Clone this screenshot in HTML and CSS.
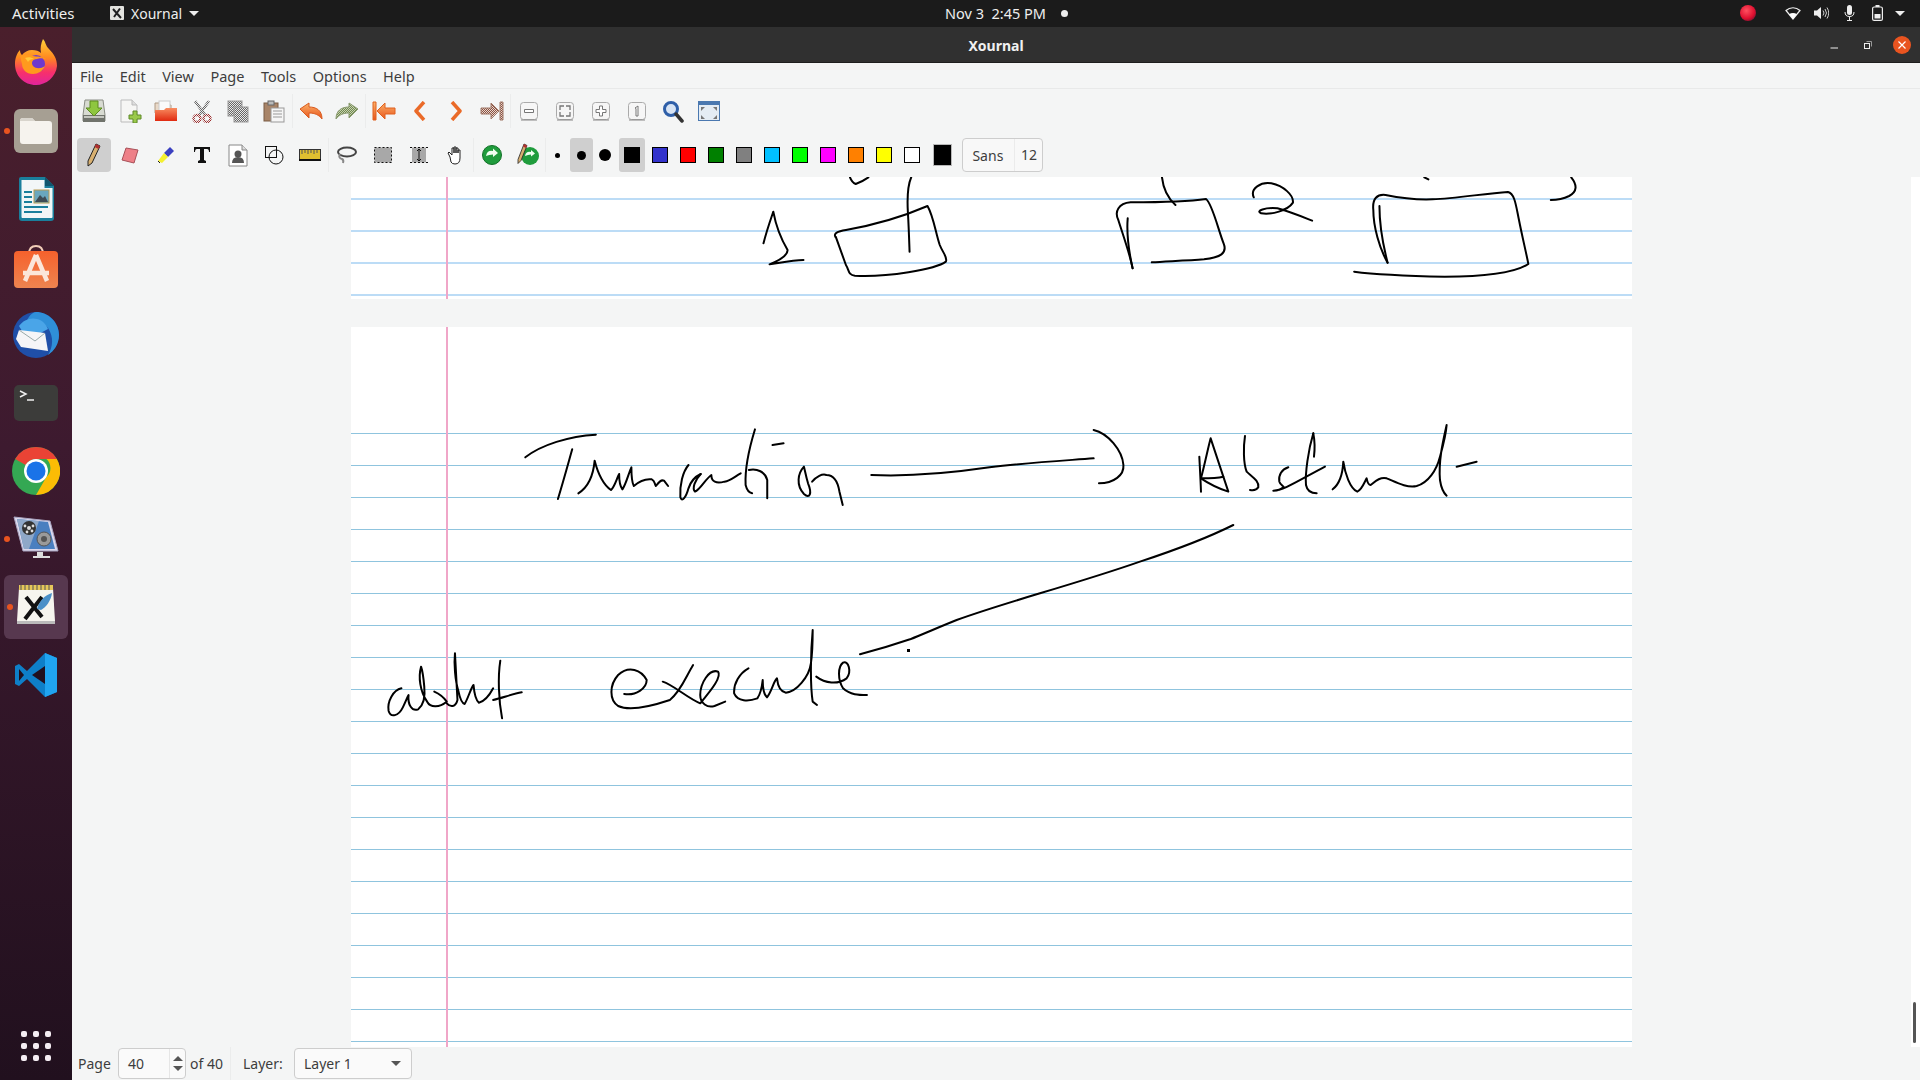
FILE: index.html
```html
<!DOCTYPE html>
<html>
<head>
  <meta charset="utf-8">
  <title>Xournal</title>
  <link rel="stylesheet" href="styles.css">
</head>
<body>
  <svg class="defs" width="0" height="0">
    <defs>
      <pattern id="dith-grey" width="2" height="2" patternUnits="userSpaceOnUse"><rect width="2" height="2" fill="#e8e8e8"/><rect width="1" height="1" fill="#666"/><rect x="1" y="1" width="1" height="1" fill="#666"/></pattern>
      <pattern id="dith-red" width="2" height="2" patternUnits="userSpaceOnUse"><rect width="2" height="2" fill="#eee"/><rect width="1" height="1" fill="#a03030"/><rect x="1" y="1" width="1" height="1" fill="#a03030"/></pattern>
      <pattern id="dith-green" width="2" height="2" patternUnits="userSpaceOnUse"><rect width="2" height="2" fill="#c8d0b0"/><rect width="1" height="1" fill="#6f8a50"/><rect x="1" y="1" width="1" height="1" fill="#6f8a50"/></pattern>
      <pattern id="dith-brown" width="2" height="2" patternUnits="userSpaceOnUse"><rect width="2" height="2" fill="#e8d8d0"/><rect width="1" height="1" fill="#8a5040"/><rect x="1" y="1" width="1" height="1" fill="#8a5040"/></pattern>
      <linearGradient id="fox" x1="0" y1="0" x2="0" y2="1"><stop offset="0" stop-color="#ffd23a"/><stop offset=".4" stop-color="#ff8a1f"/><stop offset=".72" stop-color="#f8306a"/><stop offset="1" stop-color="#e0249c"/></linearGradient>
      <linearGradient id="bag" x1="0" y1="0" x2="0" y2="1"><stop offset="0" stop-color="#f6612c"/><stop offset="1" stop-color="#ee8450"/></linearGradient>
      <linearGradient id="arrow-o" x1="0" y1="0" x2="0" y2="1"><stop offset="0" stop-color="#fbb26a"/><stop offset="1" stop-color="#e8531a"/></linearGradient>
      <linearGradient id="folder-o" x1="0" y1="0" x2="0" y2="1"><stop offset="0" stop-color="#f88c60"/><stop offset="1" stop-color="#e02a10"/></linearGradient>
      <radialGradient id="ball" cx=".4" cy=".35" r=".7"><stop offset="0" stop-color="#ff5060"/><stop offset=".7" stop-color="#e01030"/><stop offset="1" stop-color="#8a1030"/></radialGradient>
    </defs>
  </svg>

  <header class="topbar">
    <div class="topbar-left">
      <span class="activities">Activities</span>
      <span class="appmenu">
        <svg width="14" height="14" viewBox="0 0 14 14"><rect width="14" height="14" rx="1" fill="#e4e4e0"/><path d="M3 3l8 9M10 2.500L4 11" stroke="#222" stroke-width="2"/></svg>
        <span>Xournal</span>
        <i class="caret"></i>
      </span>
    </div>
    <div class="clock">Nov 3&nbsp; 2:45 PM <i class="clock-dot"></i></div>
    <div class="tray">
      <svg class="rec" width="16" height="16" viewBox="0 0 16 16"><circle cx="8" cy="8" r="8" fill="url(#ball)"/></svg>
      <span class="tray-item"><svg width="16" height="14" viewBox="0 0 16 14"><path d="M8 13L1 4.500C5 .8 11 .8 15 4.500z" fill="none" stroke="#eee" stroke-width="1.200"/><path d="M8 13L4 8.200C6.500 6.600 9.500 6.600 12 8.200z" fill="#fff"/></svg></span>
      <span class="tray-item"><svg width="15" height="14" viewBox="0 0 15 14"><path d="M0 4.500h3L7 1v12L3 9.500H0z" fill="#eee"/><path d="M9 4.500q2 2.500 0 5M11 3q3 4 0 8M13 1.500q3.500 5.500 0 11" fill="none" stroke="#ccc"/></svg></span>
      <span class="tray-item"><svg width="11" height="16" viewBox="0 0 11 16"><rect x="3" y="0" width="5" height="10" rx="2.500" fill="#eee"/><path d="M1 7q0 4.500 4.500 4.500T10 7M5.500 11.500V15M3 15.500h5" fill="none" stroke="#eee"/></svg></span>
      <span class="tray-item"><svg width="11" height="16" viewBox="0 0 11 16"><rect x=".6" y="2" width="9.800" height="13.400" rx="1.500" fill="none" stroke="#eee" stroke-width="1.200"/><rect x="3.500" y="0" width="4" height="2" fill="#eee"/><rect x="2.500" y="9" width="6" height="4.500" fill="#eee"/></svg></span>
      <i class="caret tray-caret"></i>
    </div>
  </header>

  <div class="desktop">
    <nav class="dock">
      <div class="dock-item">
        <svg class="lift" width="46" height="48" viewBox="0 0 46 48"><path d="M2 26C2 20 4 15 7 12c0 3 1 4 2 5 2-3 6-5 10-5 4 0 7 1 9 3C27 10 28 5 30 1c3 3 2 6 6 10 5 5 8 10 8 17-1 11-11 19-21 19C11 47 2 38 2 26z" fill="url(#fox)"/><circle cx="23" cy="26" r="9" fill="#7038cc"/><path d="M7 18c4-2 9-2 13 0 4 1 9 0 13 3-3-1-7-1-9 0-5 0-6 4-4 7 3 3 8 3 12 0-2 5-7 8-12 8-7 0-11-5-11-10-1-3-1-6-2-8z" fill="#ff9a1e"/><path d="M12 20c3-1 6-1 9 1-3 0-5 1-6 3-1-2-2-3-3-4z" fill="#ffc83a"/></svg>
      </div>
      <div class="dock-item">
        <i class="running"></i>
        <svg width="44" height="44" viewBox="0 0 44 44"><rect width="44" height="44" rx="6" fill="#a69f93"/><path d="M6 12q0-3 3-3h9l3 3h14q3 0 3 3v17q0 3-3 3H9q-3 0-3-3z" fill="#f6f3ee"/><path d="M6 12q0-3 3-3h9l3 3z" fill="#d8d4cc"/></svg>
      </div>
      <div class="dock-item">
        <svg width="38" height="46" viewBox="0 0 38 46"><path d="M2 3q0-2 2-2h24l9 9v32q0 3-3 3H5q-3 0-3-3z" fill="#1a7f9c"/><path d="M4.500 4h23v8h8v29q0 1-1 1H5.500q-1 0-1-1z" fill="#f2f6f7"/><path d="M28 1l9 9h-9z" fill="#10546c"/><path d="M7 15h8v2H7zM7 20h8v2H7zM7 25h8v2H7zM7 30h24v2H7zM7 35h18v2H7z" fill="#1a7f9c"/><rect x="17" y="14" width="15" height="13" fill="#6aa7bd" stroke="#b89a50"/><path d="M18 26l5-7 3 3 2-2 3 6z" fill="#404c54"/></svg>
      </div>
      <div class="dock-item">
        <svg class="lift" width="44" height="44" viewBox="0 0 44 44"><path d="M15 10q0-8 7-8t7 8" fill="none" stroke="#f2cdb8" stroke-width="2"/><rect y="7" width="44" height="37" rx="4" fill="url(#bag)"/><path d="M22 11L11 37M22 11l11 26M9 29h26" fill="none" stroke="#fbe6da" stroke-width="4.500"/></svg>
      </div>
      <div class="dock-item">
        <svg width="48" height="48" viewBox="0 0 48 48"><circle cx="24" cy="24" r="23" fill="#1f4fa8"/><path d="M24 1c12 0 23 10 23 23 0 9-5 16-11 20 5-8 6-18 0-27-5-6-14-8-22-5 2-6 6-11 10-11z" fill="#2f8fd8"/><path d="M7 15c4-6 12-9 18-7 5 1 9 5 11 10L21 26 10 20z" fill="#4aa5e8"/><path d="M7 19l26 3 3 18-27-4-5-8z" fill="#f5f5f7"/><path d="M7 19l16 11 10-8" fill="none" stroke="#9aa" stroke-width="1"/></svg>
      </div>
      <div class="dock-item">
        <svg width="44" height="36" viewBox="0 0 44 36"><rect width="44" height="36" rx="5" fill="#3c3c3a"/><path d="M6 6l6 3-6 3M13 15h7" fill="none" stroke="#eee" stroke-width="1.500"/></svg>
      </div>
      <div class="dock-item">
        <svg width="48" height="48" viewBox="0 0 48 48"><circle cx="24" cy="24" r="24" fill="#34a853"/><path d="M24 0a24 24 0 0 1 20.800 12H24a12 12 0 0 0-10.400 6L3.200 12A24 24 0 0 1 24 0z" fill="#ea4335"/><path d="M44.800 12A24 24 0 0 1 24 48l10.400-18a12 12 0 0 0 0-18z" fill="#fbbc05"/><circle cx="24" cy="24" r="12" fill="#fff"/><circle cx="24" cy="24" r="9.500" fill="#1a73e8"/></svg>
      </div>
      <div class="dock-item">
        <i class="running"></i>
        <svg width="46" height="46" viewBox="0 0 46 46"><path d="M1 1l36 4 8 30-35 0z" fill="#dcd8ec" stroke="#a8a4c0"/><path d="M4 3l31 3 7 27-31 0z" fill="#4a7fc0"/><path d="M4 3l22 2-10 28h-5z" fill="#8fa8c8"/><circle cx="16" cy="12" r="7" fill="#333"/><circle cx="16" cy="12" r="2" fill="#ddd"/><circle cx="12" cy="10" r="1.400" fill="#ddd"/><circle cx="20" cy="10" r="1.400" fill="#ddd"/><circle cx="14" cy="16" r="1.400" fill="#ddd"/><circle cx="19" cy="15" r="1.400" fill="#ddd"/><circle cx="31" cy="23" r="7" fill="#9a9a9a" stroke="#555"/><circle cx="31" cy="23" r="3" fill="#555"/><path d="M24 36h6v4h7v2H20v-2h4z" fill="#ddd"/></svg>
      </div>
      <div class="dock-slot">
        <div class="dock-item dock-current">
          <i class="running"></i>
          <svg width="40" height="44" viewBox="0 0 40 44"><path d="M3 3h34l2 33H1z" fill="#f6f5ee"/><rect x="3" y="0" width="34" height="5" fill="#e6c85a"/><path d="M5 0v5M9 0v5M13 0v5M17 0v5M21 0v5M25 0v5M29 0v5M33 0v5" stroke="#555" stroke-width="1"/><path d="M1 36h38v3H1z" fill="#bbb"/><path d="M10 12l16 20M26 12L9 34" stroke="#111" stroke-width="4"/><path d="M36 8c-7 2-13 8-15 16l4 1c5-3 10-9 11-17z" fill="#4a90c8"/></svg>
        </div>
      </div>
      <div class="dock-item">
        <svg width="44" height="44" viewBox="0 0 44 44"><path d="M31 0L13 18 5 11 1 13v18l4 2 8-7 18 18 12-5V5z" fill="#0e7fc8"/><path d="M31 0l12 5v34l-12 5z" fill="#20a4f0"/><path d="M31 13L18 22l13 9z" fill="#21101e"/><path d="M5 16l5 6-5 6z" fill="#21101e"/></svg>
      </div>
      <div class="app-grid">
        <i></i><i></i><i></i><i></i><i></i><i></i><i></i><i></i><i></i>
      </div>
    </nav>

    <main class="window">
      <div class="titlebar">
        <span></span>
        <span class="title">Xournal</span>
        <div class="win-controls">
          <span class="win-btn"><svg width="10" height="10" viewBox="0 0 10 10"><path d="M1.500 8h7.500" stroke="#eee" stroke-width="1"/></svg></span>
          <span class="win-btn"><svg width="10" height="10" viewBox="0 0 10 10"><rect x="1.500" y="3.500" width="5" height="5" fill="none" stroke="#eee"/><path d="M3.500 1.500h5v5" fill="none" stroke="#999"/></svg></span>
          <span class="win-btn"><span class="win-close"><svg width="10" height="10" viewBox="0 0 10 10"><path d="M1.500 1.500l7 7M8.500 1.500l-7 7" stroke="#fff" stroke-width="1.200"/></svg></span></span>
        </div>
      </div>

      <div class="menubar">
        <span>File</span><span>Edit</span><span>View</span><span>Page</span><span>Tools</span><span>Options</span><span>Help</span>
      </div>

      <div class="toolbar">
        <span class="tool"><svg width="24" height="24" viewBox="0 0 24 24"><path d="M3 1h18l2 15v6H1v-6z" fill="#d8dbd2" stroke="#8a8d84"/><rect x="1" y="16" width="22" height="7" fill="#70736c"/><rect x="2" y="17" width="20" height="2" fill="#c4c6bf"/><path d="M8 2h8v7h4l-8 8-8-8h4z" fill="#8ec63f" stroke="#5c8a20"/></svg></span>
        <span class="tool"><svg width="24" height="24" viewBox="0 0 24 24"><path d="M3 1h11l5 5v17H3z" fill="#f6f6f4" stroke="#bbb"/><path d="M14 1v5h5" fill="#ddd" stroke="#bbb"/><path d="M15 12h4v4h4v4h-4v4h-4v-4h-4v-4h4z" fill="#9ac94a" stroke="#5f8a28"/></svg></span>
        <span class="tool"><svg width="24" height="22" viewBox="0 0 24 22"><path d="M1 3h8l2 2h6v8H1z" fill="#e9d9c8" stroke="#b09a84"/><rect x="5" y="1" width="11" height="12" fill="#fafafa" stroke="#ccc"/><path d="M1 10h9l2-2h11v13H1z" fill="url(#folder-o)"/></svg></span>
        <span class="tool"><svg width="20" height="23" viewBox="0 0 20 23"><path d="M3 1l10 14M17 1L7 15" stroke="url(#dith-grey)" stroke-width="3"/><circle cx="5" cy="18.500" r="3.500" fill="none" stroke="url(#dith-red)" stroke-width="2.500"/><circle cx="15" cy="18.500" r="3.500" fill="none" stroke="url(#dith-red)" stroke-width="2.500"/></svg></span>
        <span class="tool"><svg width="22" height="23" viewBox="0 0 22 23"><rect x="1" y="1" width="14" height="15" fill="url(#dith-grey)" stroke="#999"/><rect x="7" y="7" width="14" height="15" fill="url(#dith-grey)" stroke="#999"/></svg></span>
        <span class="tool"><svg width="22" height="23" viewBox="0 0 22 23"><rect x="1" y="3" width="14" height="18" fill="#a88468" stroke="#7a5c44"/><rect x="5" y="1" width="6" height="4" fill="#bbb" stroke="#666"/><rect x="8" y="8" width="13" height="14" fill="#f6f6f6" stroke="#999"/><path d="M10 11h9M10 14h9M10 17h9" stroke="#999"/></svg></span>
        <i class="sep"></i>
        <span class="tool"><svg width="24" height="18" viewBox="0 0 24 18"><path d="M1 7L10 1v4c7 0 13 3 13 12-3-4-7-6-13-6v5z" fill="url(#arrow-o)" stroke="#d95a1e" stroke-linejoin="round"/></svg></span>
        <span class="tool"><svg width="24" height="18" viewBox="0 0 24 18"><path d="M23 7L14 1v4C7 5 1 8 1 17c3-4 7-6 13-6v5z" fill="url(#dith-green)" stroke="#8a9a70" stroke-linejoin="round"/></svg></span>
        <i class="sep"></i>
        <span class="tool"><svg width="24" height="20" viewBox="0 0 24 20"><path d="M1 1h3v18H1zM5 10l8-8v5h10v6H13v5z" fill="url(#arrow-o)" stroke="#e0601e" stroke-linejoin="round"/></svg></span>
        <span class="tool"><svg width="12" height="20" viewBox="0 0 12 20"><path d="M10 1L2 10l8 9" fill="none" stroke="#ea6a28" stroke-width="3.500" stroke-linejoin="round"/></svg></span>
        <span class="tool"><svg width="12" height="20" viewBox="0 0 12 20"><path d="M2 1l8 9-8 9" fill="none" stroke="#ea6a28" stroke-width="3.500" stroke-linejoin="round"/></svg></span>
        <span class="tool"><svg width="24" height="20" viewBox="0 0 24 20"><path d="M23 1h-3v18h3zM19 10l-8-8v5H1v6h10v5z" fill="url(#dith-brown)" stroke="#a07868" stroke-linejoin="round"/></svg></span>
        <i class="sep"></i>
        <span class="tool"><svg width="18" height="19" viewBox="0 0 18 19"><rect x=".5" y=".5" width="17" height="17" rx="3" fill="#f6f6f6" stroke="#aaa"/><path d="M1 18h16" stroke="#888"/><path d="M4.500 7.500h9v3h-9z" fill="#fff" stroke="#777"/></svg></span>
        <span class="tool"><svg width="18" height="19" viewBox="0 0 18 19"><rect x=".5" y=".5" width="17" height="17" rx="3" fill="#f6f6f6" stroke="#aaa"/><path d="M1 18h16" stroke="#888"/><path d="M4 8V4h4M10 4h4v4M14 10v4h-4M8 14H4v-4" fill="none" stroke="#777" stroke-width="1.300"/></svg></span>
        <span class="tool"><svg width="18" height="19" viewBox="0 0 18 19"><rect x=".5" y=".5" width="17" height="17" rx="3" fill="#f6f6f6" stroke="#aaa"/><path d="M1 18h16" stroke="#888"/><path d="M7.500 4h3v3.500H14v3h-3.500V14h-3v-3.500H4v-3h3.500z" fill="#fff" stroke="#777"/></svg></span>
        <span class="tool"><svg width="18" height="19" viewBox="0 0 18 19"><rect x=".5" y=".5" width="17" height="17" rx="3" fill="#f6f6f6" stroke="#aaa"/><path d="M1 18h16" stroke="#888"/><path d="M7 6l3-2v10H8V6.500z" fill="#fff" stroke="#777"/></svg></span>
        <span class="tool"><svg width="22" height="23" viewBox="0 0 22 23"><circle cx="9" cy="9" r="6.500" fill="#d8e4f4" stroke="#2f5fa8" stroke-width="3"/><path d="M14 14l6 7" stroke="#333" stroke-width="3.500" stroke-linecap="round"/></svg></span>
        <span class="tool"><svg width="22" height="20" viewBox="0 0 22 20"><rect x=".5" y=".5" width="21" height="19" fill="#e4ecf4" stroke="#4a78b0"/><rect x="1" y="1" width="20" height="3" fill="#4a78b0"/><path d="M3 6l4 0-4 4zM19 6l-4 0 4 4zM3 18l4 0-4-4zM19 18l-4 0 4-4z" fill="#777"/></svg></span>
      </div>

      <div class="toolbar">
        <span class="tool active"><svg width="14" height="24" viewBox="0 0 14 24"><path d="M9 1l4 2-8 17-4 3 0-5z" fill="#d8b070" stroke="#222"/><path d="M9 1l4 2-1.500 3-4-2z" fill="#b03030"/></svg></span>
        <span class="tool"><svg width="18" height="18" viewBox="0 0 18 18"><path d="M5 2l12 2-4 13-12-3z" fill="#ee8088" stroke="#a85058" stroke-linejoin="round"/></svg></span>
        <span class="tool"><svg width="18" height="18" viewBox="0 0 18 18"><path d="M13 1l4 4-6 6-4-4z" fill="#3a40c0"/><path d="M7 7l4 4-6 6-4-2z" fill="#f4f030"/><path d="M1 15l2 2" stroke="#222"/></svg></span>
        <span class="tool"><svg width="16" height="16" viewBox="0 0 16 16"><path d="M0 0h16v5h-1q0-3-2-3h-3v11l2 1v2H4v-2l2-1V2H3Q1 2 1 5H0z" fill="#111"/></svg></span>
        <span class="tool"><svg width="20" height="23" viewBox="0 0 20 23"><path d="M1 1h13l5 5v16H1z" fill="#fff" stroke="#888"/><path d="M14 1v5h5" fill="#ddd" stroke="#888"/><circle cx="10" cy="10" r="3.500" fill="#555"/><path d="M4 19q0-6 6-6t6 6z" fill="#555"/></svg></span>
        <span class="tool"><svg width="19" height="19" viewBox="0 0 19 19"><rect x=".5" y=".5" width="11" height="11" fill="none" stroke="#111"/><circle cx="11" cy="11" r="7" fill="none" stroke="#111"/></svg></span>
        <span class="tool"><svg width="22" height="12" viewBox="0 0 22 12"><rect x=".5" y=".5" width="21" height="10" fill="#e0c030" stroke="#333"/><path d="M3 1v4M6 1v3M9 1v4M12 1v3M15 1v4M18 1v3" stroke="#555"/><rect y="10" width="22" height="2" fill="#111"/></svg></span>
        <i class="sep"></i>
        <span class="tool"><svg width="20" height="18" viewBox="0 0 20 18"><ellipse cx="10" cy="6" rx="9" ry="4.500" fill="none" stroke="#444" stroke-width="2"/><path d="M3 8q-2 4 2 5 2 1 1 4" fill="none" stroke="#888" stroke-width="2"/></svg></span>
        <span class="tool"><svg width="18" height="16" viewBox="0 0 18 16"><rect x=".5" y=".5" width="17" height="15" fill="#a8a8a8" stroke="#111" stroke-dasharray="2 2"/></svg></span>
        <span class="tool"><svg width="18" height="16" viewBox="0 0 18 16"><rect x="2" y=".5" width="14" height="15" fill="#a8a8a8"/><path d="M0 .5h18M0 15.500h18" stroke="#111" stroke-dasharray="2 2"/><path d="M9 2v12M7 4l2-2 2 2M7 12l2 2 2-2" fill="none" stroke="#111"/></svg></span>
        <span class="tool"><svg width="16" height="20" viewBox="0 0 16 20"><path d="M3 12L1 8l1-1 3 3V3l2 0v5-6h2v6-5h2v5-3h2v8q0 6-5 6-3 0-4-2z" fill="#fff" stroke="#222" stroke-linejoin="round"/></svg></span>
        <i class="sep"></i>
        <span class="tool"><svg width="20" height="20" viewBox="0 0 20 20"><circle cx="10" cy="10" r="9.500" fill="#1f9c3c" stroke="#137028"/><path d="M4 11q1-6 7-5V3.500l5 4.500-5 4V9.500q-4 0-7 1.500z" fill="#f0fff0"/></svg></span>
        <span class="tool"><svg width="24" height="24" viewBox="0 0 24 24"><circle cx="14" cy="13" r="9" fill="#1f9c3c"/><path d="M9 13q1-5 6-4V7l4 3.500-4 3v-2q-3 0-6 1.500z" fill="#f0fff0"/><path d="M8 1l3 1.500-6 15-3 3v-4z" fill="#d8b070" stroke="#222" stroke-width=".8"/><path d="M8 1l3 1.500-1 2.500-3-1.500z" fill="#b03030"/></svg></span>
        <i class="sep sep-thin"></i>
        <span class="thick"><i class="dot dot-s"></i></span>
        <span class="thick active"><i class="dot dot-m"></i></span>
        <span class="thick"><i class="dot dot-l"></i></span>
        <span class="colour active"><i class="swatch c-black"></i></span>
        <span class="colour"><i class="swatch c-blue"></i></span>
        <span class="colour"><i class="swatch c-red"></i></span>
        <span class="colour"><i class="swatch c-green"></i></span>
        <span class="colour"><i class="swatch c-grey"></i></span>
        <span class="colour"><i class="swatch c-cyan"></i></span>
        <span class="colour"><i class="swatch c-lime"></i></span>
        <span class="colour"><i class="swatch c-magenta"></i></span>
        <span class="colour"><i class="swatch c-orange"></i></span>
        <span class="colour"><i class="swatch c-yellow"></i></span>
        <span class="colour"><i class="swatch c-white"></i></span>
        <i class="picker"></i>
        <span class="fontbtn"><span class="font-name">Sans</span><span class="font-size">12</span></span>
      </div>

      <div class="canvas">
        <div class="pages">
          <svg class="page" width="1281" height="122" viewBox="351 177 1281 122">
            <g class="rules-first">
              <rect x="351" y="198" width="1281" height="2"/>
              <rect x="351" y="230" width="1281" height="2"/>
              <rect x="351" y="262" width="1281" height="2"/>
              <rect x="351" y="294" width="1281" height="2"/>
            </g>
            <rect class="margin-line" x="446" y="177" width="2" height="122"/>
            <g class="ink" transform="translate(340 170) scale(.408 .3333)">
              <path d="M1250,22 Q1255,38 1264,42 Q1280,35 1295,22"/>
              <path d="M1400,22 C1390,50 1390,90 1392,130 S1395,210 1396,245"/>
              <path d="M1038,220 C1045,185 1055,150 1062,125 C1068,165 1080,205 1097,240 C1098,258 1075,272 1053,283 C1080,278 1110,270 1136,270"/>
              <path d="M1215,202 C1208,190 1220,184 1240,180 C1300,167 1370,145 1440,108 C1455,140 1460,190 1470,225 C1478,250 1490,262 1485,275 C1460,298 1340,322 1262,317 C1245,315 1248,300 1240,285 L1215,200"/>
            </g>
            <g class="ink" transform="translate(1000 170) scale(.408 .3333)">
              <path d="M397,22 C400,55 412,85 430,105"/>
              <path d="M325,295 C318,250 300,190 290,150 C280,125 290,100 320,97 C380,97 450,97 505,87 C520,100 535,180 548,220 C558,250 540,262 500,268 C460,272 410,274 372,277"/>
              <path d="M313,145 C310,190 315,240 325,295"/>
              <path d="M622,82 C612,55 640,35 665,40 C695,48 720,75 718,98 C705,122 665,135 640,130 C625,122 650,112 680,115 C710,125 740,140 765,152"/>
              <path d="M950,278 C930,235 915,170 915,120 C912,85 925,72 945,75 C985,85 1020,90 1060,88 C1120,85 1190,70 1245,66 C1262,70 1265,110 1272,150 C1280,200 1290,250 1295,282 C1260,310 1180,320 1090,320 C1010,318 930,315 868,305"/>
              <path d="M930,108 C930,170 942,240 950,278"/>
              <path d="M1040,22 L1050,28"/>
              <path d="M1400,22 C1415,45 1415,65 1395,78 C1380,87 1365,90 1350,90"/>
            </g>
          </svg>

          <svg class="page page-second" width="1281" height="720" viewBox="351 327 1281 720">
            <defs>
              <pattern id="rule-lines" x="0" y="433" width="32" height="32" patternUnits="userSpaceOnUse"><rect width="32" height="1" fill="#8fc4de"/></pattern>
            </defs>
            <rect x="351" y="433" width="1281" height="620" fill="url(#rule-lines)"/>
            <rect class="margin-line" x="446" y="327" width="2" height="720"/>
            <g class="ink" transform="translate(500 410) scale(.408 .3333)">
              <path d="M62,142 C100,105 170,78 235,74"/>
              <path d="M177,118 C165,170 155,215 142,267"/>
              <path d="M192,250 C212,235 228,205 232,152 C240,190 255,225 272,240 C282,228 286,205 292,192 C292,210 295,230 300,238 C310,220 315,190 322,172 C322,195 322,215 328,228 C340,215 352,205 372,208 C380,212 378,220 382,228 C390,215 395,208 402,212 L412,228"/>
              <path d="M462,165 C448,185 440,225 442,262 C446,278 456,262 462,235 C468,212 478,200 492,192"/>
              <path d="M492,192 C478,210 470,235 478,245 C490,240 505,205 518,195 C518,215 530,222 550,215 C565,212 575,200 590,190"/>
              <path d="M625,58 C612,110 600,180 602,225 C605,240 610,248 618,250"/>
              <path d="M610,180 C630,175 650,185 655,210 L655,265"/>
              <path d="M668,105 L695,100"/>
              <path d="M745,170 C730,190 725,225 745,252 C760,268 765,250 755,220 C750,200 748,185 745,170"/>
              <path d="M765,215 C775,200 790,190 800,195 C820,195 828,215 832,245 L840,285"/>
              <path d="M910,195 C1000,200 1100,190 1200,172 C1290,158 1380,152 1455,145"/>
              <path d="M1455,60 C1490,70 1525,120 1528,165 C1530,195 1505,220 1468,220"/>
            </g>
            <g class="ink" transform="translate(1100 410) scale(.3333)">
              <path d="M298,140 C300,180 302,215 303,245"/>
              <path d="M303,205 C315,160 325,110 332,85 C345,125 370,200 385,245 C355,235 325,220 303,205"/>
              <path d="M303,205 C330,205 350,205 370,200"/>
              <path d="M435,78 C430,110 430,160 440,185 C455,200 478,212 475,232 C470,240 460,242 450,240"/>
              <path d="M565,172 C545,178 535,195 538,215 C540,225 555,230 550,232 C540,242 530,242 520,242 C550,242 590,215 675,170"/>
              <path d="M640,70 C625,120 615,190 618,225 C622,245 635,250 650,250"/>
              <path d="M640,70 C645,95 645,115 642,140"/>
              <path d="M698,238 C715,225 728,195 730,155 C735,190 750,235 772,245 C785,240 792,220 800,205 C802,215 805,225 812,225 C825,215 840,200 860,205 C885,215 920,235 950,228 C985,218 1010,180 1020,140 C1030,105 1038,75 1040,45 C1030,90 1015,150 1020,210 C1023,230 1030,248 1040,257"/>
              <path d="M1070,170 L1130,155"/>
            </g>
            <g class="ink" transform="translate(370 620) scale(.357 .3333)">
              <path d="M88,205 C65,210 48,245 52,272 C58,295 80,288 92,262 C100,245 105,230 108,225 C105,255 118,275 135,268 C150,255 155,230 152,200 C150,175 148,155 143,140 C135,170 140,215 160,245 C170,265 195,262 215,245 C205,230 195,222 180,215"/>
              <path d="M215,250 C225,262 240,262 245,240 L238,100 C235,130 238,180 248,215 C252,235 258,250 265,252 C275,235 282,205 290,195 C292,220 296,240 305,248 C320,245 335,225 345,205"/>
              <path d="M365,122 C358,170 360,240 370,295"/>
              <path d="M345,240 C375,232 400,222 425,217"/>
              <path d="M712,222 C745,228 775,205 775,180 C760,150 725,135 695,165 C670,195 670,240 695,258 C730,275 790,258 840,240 C870,215 885,170 905,135"/>
              <path d="M820,185 C850,195 890,235 925,250 C960,205 985,170 975,155 C950,145 925,190 925,225 C925,250 945,265 965,258 L995,245"/>
              <path d="M1060,145 C1035,160 1018,190 1020,220 C1030,245 1060,245 1085,235 C1095,220 1098,200 1100,180 C1100,205 1105,225 1112,232 C1125,215 1130,185 1140,175 C1142,195 1150,215 1165,218 C1195,215 1230,170 1235,130 C1240,95 1240,60 1240,30 C1235,90 1232,190 1240,245 L1252,255"/>
              <path d="M1250,170 C1275,190 1310,195 1335,175 C1350,155 1340,120 1325,128 C1310,140 1310,180 1325,205 C1345,225 1370,225 1392,225"/>
            </g>
            <g class="ink" transform="translate(840 510) scale(.3333)">
              <path d="M1180,45 C1100,85 1000,122 900,155 C800,190 700,220 600,250 C500,280 420,305 350,330 C300,350 250,372 210,388 C160,405 110,420 60,433"/>
            </g>
            <rect x="907" y="649" width="3" height="3"/>
          </svg>
        </div>
        <div class="scrollbar"><i class="thumb"></i></div>
      </div>

      <div class="statusbar">
        <span class="status-page">Page</span>
        <span class="spin">
          <span class="spin-value">40</span>
          <span class="spin-arrows"><i class="arrow-up"></i><i class="arrow-down"></i></span>
        </span>
        <span class="status-of">of 40</span>
        <i class="sep status-sep"></i>
        <span class="status-layer">Layer:</span>
        <span class="combo"><span>Layer 1</span><i class="caret caret-dark"></i></span>
      </div>
    </main>
  </div>
</body>
</html>
```

FILE: styles.css
```css
* { box-sizing: border-box; }
html, body { height: 100%; }
body {
  margin: 0;
  height: 1080px;
  overflow: hidden;
  display: flex;
  flex-direction: column;
  font-family: "Noto Sans", sans-serif;
  font-size: 14px;
  color: #3d3d3d;
  background: #f4f5f5;
}
i { display: block; }
svg { display: block; flex: none; }
.defs { position: absolute; }

.topbar {
  height: 27px;
  flex: none;
  display: flex;
  align-items: center;
  padding-bottom: 1px;
  background: #1b1b1b;
  color: #eee;
  font-size: 14.500px;
}
.topbar-left { width: 945px; display: flex; align-items: center; }
.activities { margin-left: 12px; width: 98px; font-size: 15px; }
.appmenu { display: flex; align-items: center; gap: 7px; font-size: 14px; }
.caret {
  width: 0;
  height: 0;
  border-left: 5px solid transparent;
  border-right: 5px solid transparent;
  border-top: 5px solid #eee;
}
.clock { display: flex; align-items: center; gap: 11px; white-space: pre; }
.clock-dot { width: 7px; height: 7px; border-radius: 50%; background: #eee; }
.tray { margin-left: auto; display: flex; align-items: center; padding-right: 11px; }
.rec { margin-right: 23px; }
.tray-item { width: 28px; display: flex; justify-content: center; }
.tray-caret { margin: 0 4px; }

.desktop { flex: 1; display: flex; min-height: 0; }
.dock {
  width: 72px;
  flex: none;
  display: flex;
  flex-direction: column;
  padding-top: 2px;
  background: linear-gradient(#4a1f2c, #3d1a2f 40%, #21101e 100%);
}
.dock-item {
  position: relative;
  height: 68px;
  flex: none;
  display: flex;
  align-items: center;
  justify-content: center;
}
.lift { margin-bottom: 3px; }
.dock-slot { height: 68px; flex: none; display: flex; align-items: center; }
.dock-current {
  flex: 1;
  height: 64px;
  margin: 0 4px;
  background: #57384f;
  border-radius: 6px;
}
.dock-current .running { left: 3px; top: 29px; }
.running {
  position: absolute;
  left: 4px;
  top: 31px;
  width: 6px;
  height: 6px;
  border-radius: 50%;
  background: #e95420;
}
.app-grid {
  margin-top: auto;
  margin-bottom: 19px;
  align-self: center;
  display: grid;
  grid-template-columns: repeat(3, 6px);
  gap: 6px;
}
.app-grid i { width: 6px; height: 6px; border-radius: 2px; background: #f4ecf2; }

.window { flex: 1; min-width: 0; display: flex; flex-direction: column; }
.titlebar {
  height: 36px;
  flex: none;
  display: grid;
  grid-template-columns: 1fr auto 1fr;
  align-items: center;
  background: #303030;
  border-bottom: 1px solid #1e1e1e;
}
.title { color: #f0f0f0; font-weight: 700; font-size: 14px; padding-top: 1px; }
.win-controls { display: flex; justify-content: flex-end; padding-right: 1px; }
.win-btn { width: 34px; display: flex; justify-content: center; align-items: center; }
.win-close {
  width: 18px;
  height: 18px;
  border-radius: 50%;
  background: #e95420;
  display: flex;
  align-items: center;
  justify-content: center;
}

.menubar {
  height: 26px;
  flex: none;
  display: flex;
  align-items: center;
  padding-left: 8px;
  gap: 16.500px;
  border-bottom: 1px solid #e8e9e9;
  font-size: 14.500px;
}

.toolbar {
  height: 44px;
  flex: none;
  display: flex;
  align-items: center;
  padding-left: 4px;
}
.tool {
  width: 36px;
  height: 34px;
  flex: none;
  display: flex;
  align-items: center;
  justify-content: center;
  border-radius: 4px;
}
.active { background: #cfcfcf; }
.tool.active { width: 34px; margin: 0 1px; }
.sep { width: 1px; height: 34px; flex: none; background: #ebecec; }
.sep-thin { margin-left: -1px; }
.thick {
  width: 23.500px;
  height: 34px;
  flex: none;
  display: flex;
  align-items: center;
  justify-content: center;
  border-radius: 3px;
}
.thick.active { margin: 0; }
.dot { border-radius: 50%; background: #000; }
.dot-s { width: 5px; height: 5px; }
.dot-m { width: 9px; height: 9px; }
.dot-l { width: 12px; height: 12px; }
.colour {
  width: 28.100px;
  height: 34px;
  flex: none;
  display: flex;
  align-items: center;
  justify-content: center;
  border-radius: 3px;
}
.colour.active { width: 26px; margin-left: 2px; margin-right: 1px; }
.swatch { width: 16px; height: 16px; border: 1px solid #000; }
.c-black { background: #000; }
.c-blue { background: #3333cc; }
.c-red { background: #f00; }
.c-green { background: #008000; }
.c-grey { background: #808080; }
.c-cyan { background: #00c0ff; }
.c-lime { background: #0f0; }
.c-magenta { background: #f0f; }
.c-orange { background: #ff8000; }
.c-yellow { background: #ff0; }
.c-white { background: #fff; }
.picker {
  width: 19px;
  height: 22px;
  flex: none;
  margin-left: 7px;
  margin-right: 10px;
  background: #000;
  border: 1px solid #b8b8b8;
}
.fontbtn {
  width: 81px;
  height: 34px;
  flex: none;
  display: flex;
  align-items: center;
  background: #f8f8f8;
  border: 1px solid #cdcdcd;
  border-radius: 4px;
}
.font-name { width: 51px; padding-left: 9px; }
.font-size { flex: 1; text-align: center; height: 100%; line-height: 32px; border-left: 1px solid #ebebeb; }

.canvas { flex: 1; min-height: 0; display: flex; overflow: hidden; }
.pages { flex: 1; min-width: 0; display: flex; flex-direction: column; align-items: center; }
.page { background: #fff; flex: none; }
.page-second { margin-top: 28px; }
.rules-first rect { fill: #bcdcf6; }
.margin-line { fill: #f0a6c8; }
.ink path {
  fill: none;
  stroke: #000;
  stroke-width: 2;
  stroke-linecap: round;
  stroke-linejoin: round;
  vector-effect: non-scaling-stroke;
}
.scrollbar { width: 9px; flex: none; display: flex; flex-direction: column; justify-content: flex-end; background: #fff; padding: 0 4px 4px 2px; }
.thumb { height: 41px; background: #555; border-radius: 2px; }

.statusbar {
  height: 33px;
  flex: none;
  display: flex;
  align-items: center;
}
.status-page { margin-left: 6px; width: 40px; }
.spin {
  width: 68px;
  height: 31px;
  flex: none;
  display: flex;
  background: #fafafa;
  border: 1px solid #cdcdcd;
  border-radius: 4px;
}
.spin-value { width: 50px; padding-left: 9px; line-height: 29px; }
.spin-arrows { flex: 1; border-left: 1px solid #e6e6e6; display: flex; flex-direction: column; align-items: center; justify-content: space-around; padding: 4px 0; }
.arrow-up { border-left: 5px solid transparent; border-right: 5px solid transparent; border-bottom: 5px solid #555; }
.arrow-down { border-left: 5px solid transparent; border-right: 5px solid transparent; border-top: 5px solid #555; }
.status-of { margin-left: 4px; width: 40px; }
.status-sep { height: 33px; }
.status-layer { margin-left: 12px; width: 51px; }
.combo {
  width: 118px;
  height: 31px;
  flex: none;
  display: flex;
  align-items: center;
  justify-content: space-between;
  padding: 0 10px 0 9px;
  background: #fafafa;
  border: 1px solid #cdcdcd;
  border-radius: 4px;
}
.caret-dark { border-top-color: #555; }
```
